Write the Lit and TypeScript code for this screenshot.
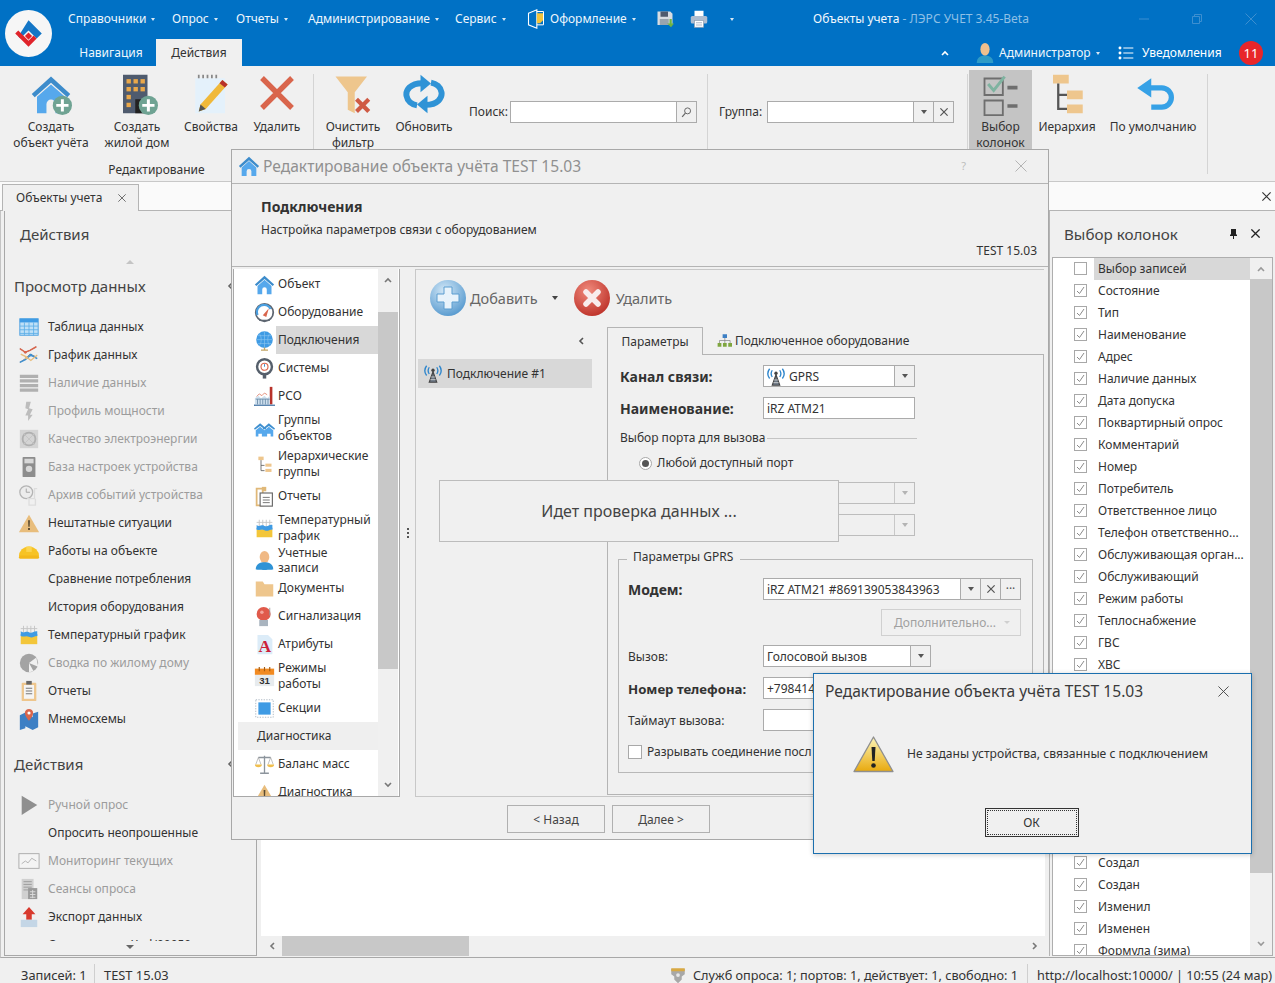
import { LitElement, css, html, svg } from "lit";
import { customElement } from "lit/decorators.js";

const homeShape = svg`<path d="M12 2 1 12l1.700 1.800L12 5.600l9.300 8.200L23 12z" fill="#3d8ccb"/><path d="M4 13.600 12 6.600l8 7V23h-5.400v-5.200a2.600 2.600 0 0 0-5.200 0V23H4z" fill="#56a8ec"/>`;
const plusBadge = svg`<circle cx="18.500" cy="18.500" r="5.500" fill="#6fa393"/><path d="M18.500 15v7M15 18.500h7" stroke="#fff" stroke-width="1.700"/>`;
const warnShape = svg`<path d="M12 3 23 22H1z" fill="#e8bd7c"/><path d="M11 9h2l-.3 7h-1.400zM11 17.500h2v2h-2z" fill="#5a4a30"/>`;

const icons: Record<string, unknown> = {
  home: homeShape,
  homePlus: svg`${homeShape}${plusBadge}`,
  building: svg`<rect x="4" y="1" width="14" height="22" fill="#4f5b6e"/><g fill="#eaa84a"><rect x="6" y="3.500" width="2.500" height="2.500"/><rect x="10" y="3.500" width="2.500" height="2.500"/><rect x="14" y="3.500" width="2.500" height="2.500"/><rect x="6" y="8" width="2.500" height="2.500"/><rect x="10" y="8" width="2.500" height="2.500"/><rect x="14" y="8" width="2.500" height="2.500"/><rect x="6" y="12.500" width="2.500" height="2.500"/><rect x="6" y="17" width="2.500" height="2.500"/></g><rect x="11" y="15" width="5" height="8" fill="#222"/>${plusBadge}`,
  note: svg`<rect x="3" y="3" width="17" height="20" fill="#e4f1fb"/><path d="M5 1v2M7.500 1v2M10 1v2M12.500 1v2M15 1v2" stroke="#888" stroke-width="1"/><path d="m18.500 4 3 2.500L9 20.500l-4 1.500 1-4z" fill="#f0b93a"/><path d="m18.500 4 3 2.500-1.600 1.800-3-2.500z" fill="#b8322a"/><path d="m5 22 1-4 3 2.500z" fill="#555"/>`,
  cross: svg`<path d="M3 3l18 18M21 3 3 21" stroke="#d9654c" stroke-width="3.200"/>`,
  funnel: svg`<path d="M2 2h18l-7 9v12l-4-2V11z" fill="#eec68d"/><path d="m14 15 7 7m0-7-7 7" stroke="#cf5a44" stroke-width="2.400"/>`,
  refresh: svg`<path d="M11 5.800C4 5.800 1.500 10 2 13c.5 3 3 5 6 5.500" fill="none" stroke="#2f93d6" stroke-width="3.400"/><path d="M10 1v10l6-5z" fill="#2f93d6"/><path d="M13 18.200c7 0 9.500-4.200 9-7.200-.5-3-3-5-6-5.500" fill="none" stroke="#2f93d6" stroke-width="3.400"/><path d="M14 13v10l-6-5z" fill="#2f93d6"/>`,
  columns: svg`<path d="M3 3h10v9H3zM3 15h10v8H3z" fill="none" stroke="#6e6e6e" stroke-width="1"/><path d="m5 6 3 3.500L14 2" fill="none" stroke="#7fb3a0" stroke-width="1.600"/><path d="M15.500 7H21v2h-5.500zM15.500 17H21v2h-5.500z" fill="#6e6e6e"/>`,
  tree: svg`<rect x="4" y="1" width="9" height="5" fill="#eec68d"/><rect x="12" y="10" width="9" height="5" fill="#eec68d"/><rect x="12" y="18" width="9" height="5" fill="#eec68d"/><path d="M7 6v14.500h5M7 12.500h5" fill="none" stroke="#555" stroke-width="1.300"/>`,
  undo: svg`<path d="M11 3v4h6a7 7 0 0 1 0 14h-6v-3h6a4 4 0 0 0 0-8h-6v4L3 8.500z" fill="#36a1e6"/>`,
  table: svg`<rect x="2" y="3" width="20" height="18" fill="#bfe0f7" stroke="#4a9fe0"/><rect x="2" y="3" width="20" height="4" fill="#3f9be4"/><path d="M2 11h20M2 15h20M2 19h20M7 7v14M12 7v14M17 7v14" stroke="#5aaee8" stroke-width=".9"/>`,
  chart: svg`<path d="m2 5 6 4 5-2 7-4M2 20l6-4 5-5 7 3" fill="none" stroke="#888" stroke-width="1"/><path d="m2 5 6 4 5-2 7-4" fill="none" stroke="#d9654c" stroke-width="1.600"/><path d="m2 20 6-3 6-5 7 4" fill="none" stroke="#3f8fcf" stroke-width="1.600"/><path d="m3 11 6 3 5 4 7-6" fill="none" stroke="#e8bd7c" stroke-width="1.400"/><circle cx="8" cy="9" r="1.500" fill="#d9654c"/><circle cx="14" cy="12" r="1.500" fill="#3f8fcf"/><circle cx="9" cy="15" r="1.500" fill="#e8bd7c"/>`,
  bars: svg`<path d="M2 3h20v3.500H2zM2 8h20v3.500H2zM2 13h20v3.500H2zM2 18h20v3.500H2z" fill="#b0b0b0"/>`,
  bolt: svg`<path d="m9 2h5l-2 7 4 1-3 6h3l-5 7v-6H8l3-7-3-1z" fill="#bdbdbd"/>`,
  quality: svg`<rect x="2" y="2" width="20" height="20" fill="#d4d4d4"/><circle cx="12" cy="12" r="7" fill="none" stroke="#b0b0b0" stroke-width="2"/><path d="M6 6l12 12M18 6 6 18" stroke="#c4c4c4"/>`,
  device: svg`<rect x="5" y="1" width="14" height="22" rx="1" fill="#8d8d8d"/><rect x="7" y="3" width="10" height="5" fill="#d8d8d8"/><circle cx="12" cy="14" r="3.500" fill="#d8d8d8"/>`,
  clock: svg`<circle cx="9" cy="9" r="7" fill="#ececec" stroke="#b4b4b4" stroke-width="1.400"/><path d="M9 5v4h4" fill="none" stroke="#a0a0a0"/><path d="M10 16h8V5h3M12 16v7h7v-7" fill="none" stroke="#ddd" stroke-width="1.400"/>`,
  warn: warnShape,
  hat: svg`<path d="M1 18a11 11 0 0 1 22 0z" fill="#f7c325"/><rect x="1" y="17" width="22" height="3.500" rx="1.700" fill="#f3b81c"/><path d="M9 7h6v6H9z" fill="#fbd551"/>`,
  temp: svg`<path d="M6 2v9M10 2v9M14 2v9M18 2v9M3 5h18" stroke="#c4c4c4"/><path d="M3 8c4 3 5-1 9 1s5-2 9-1v5H3z" fill="#3f9be4"/><path d="M3 13h18v9H3z" fill="#f3c63a"/><path d="M3 13c4 2 5-1 9 1s5-1 9-1v-2c-4 0-5 2-9 1s-5 0-9-1z" fill="#3f9be4"/>`,
  pie: svg`<circle cx="12" cy="12" r="10" fill="#a3a3a3"/><path d="M12 12 20 6l2 10zM12 12l5 9-5 1z" fill="#f0f0f0"/>`,
  clip: svg`<rect x="4" y="3" width="16" height="20" rx="1" fill="#eec68d"/><rect x="6.500" y="5.500" width="11" height="15" fill="#f5f5f5"/><rect x="9" y="1" width="6" height="4" fill="#666"/><path d="M8.500 9h7M8.500 12h7M8.500 15h7" stroke="#777" stroke-width="1.200"/>`,
  map: svg`<path d="M2 8l6-3v17l-6 2zM16 6l6-2v17l-6 3zM8 5l8 5v14l-8-4z" fill="#3d7fc4"/><path d="M12 1a4.500 4.500 0 0 1 4.500 4.500C16.500 9 12 14 12 14S7.500 9 7.500 5.500A4.500 4.500 0 0 1 12 1z" fill="#d9654c"/><circle cx="12" cy="5.500" r="1.700" fill="#fff"/>`,
  play: svg`<path d="M4 2 21 12 4 23z" fill="#8f8f8f"/>`,
  monitor: svg`<rect x="1" y="4" width="22" height="16" fill="#f4f4f4" stroke="#aaa"/><path d="m4 15 4-3 3 2 4-5 5 3" fill="none" stroke="#b0b0b0"/>`,
  sessions: svg`<path d="M4 1h13v22H4z" fill="#d0d0d0"/><path d="M6 4h9M6 7h9M6 10h9M6 13h5" stroke="#999"/><rect x="11" y="11" width="10" height="12" fill="#9a9a9a"/><path d="M13 15h6M13 18h6M13 21h6M16 13v9" stroke="#ddd"/>`,
  upload: svg`<path d="M12 1 19 9h-4v6H9V9H5z" fill="#d83a2e"/><rect x="3" y="15" width="18" height="8" fill="#c4d6e6"/>`,
  gauge: svg`<circle cx="12" cy="12" r="10" fill="#fff" stroke="#5d6570" stroke-width="2"/><path d="M4 15a8 8 0 0 1 15-7" fill="none" stroke="#4a9fe0" stroke-width="2.500"/><path d="M10 15 17 7l-3 10z" fill="#d9654c"/><path d="M6 21h12" stroke="#5d6570" stroke-width="1.500"/>`,
  globe: svg`<circle cx="12" cy="11" r="9.500" fill="#3f9be4"/><path d="M3 11h18M12 2v18M6 4c3 4 3 10 0 14M18 4c-3 4-3 10 0 14M4 6.500h16M4 15.500h16" fill="none" stroke="#8cc6f0" stroke-width=".7"/><path d="M8 23h8M12 20v3" stroke="#c2a565" stroke-width="1.500"/>`,
  system: svg`<circle cx="12" cy="10" r="8.500" fill="#fff" stroke="#555f6b" stroke-width="2.800"/><circle cx="12" cy="10" r="4" fill="none" stroke="#d9654c" stroke-width="1.300"/><path d="M12 10V7" stroke="#3f8fcf" stroke-width="1.200"/><rect x="10" y="18.500" width="4" height="5" fill="#555f6b"/>`,
  plant: svg`<rect x="18" y="1" width="3" height="20" fill="#b8322a"/><path d="M1 14l4-3 3 3 4-3 3 3 3-3v10H1z" fill="#cfe0ee"/><path d="M2 15h16M4 15v6M7 15v6M10 15v6M13 15v6M16 15v6" stroke="#6a8ba8"/><path d="M0 22h24" stroke="#4a7aa8" stroke-width="1.500"/><path d="M3 12l3-3 3 2 3-3 3 2" fill="none" stroke="#d9654c" stroke-width=".8"/>`,
  homes: svg`<path d="M7 6 0 12l1 1.500L7 9l6 4.500L14 12zM17 6l-7 6 1 1.500L17 9l6 4.500L24 12z" fill="#3f8fcf"/><path d="M2 14 7 10l5 4v7H9v-3H5v3H2zM12 14l5-4 5 4v7h-3v-3h-4v3h-3z" fill="#56a8ec"/>`,
  treeSmall: svg`<rect x="5" y="3" width="6" height="4" fill="#eec68d"/><rect x="13" y="11" width="7" height="3.500" fill="#eec68d"/><rect x="13" y="17" width="7" height="3.500" fill="#eec68d"/><path d="M8 7v12h4M8 13h4" fill="none" stroke="#666"/>`,
  report: svg`<path d="M3 3h7v19H3z" fill="none" stroke="#e0b878" stroke-width="2"/><rect x="7" y="8" width="14" height="15" fill="#fff" stroke="#666" stroke-width="1.300"/><path d="M10 13h8M10 16h8M10 19h8" stroke="#666"/><rect x="9" y="1" width="5" height="5" fill="#e0b878"/>`,
  user: svg`<ellipse cx="12" cy="8" rx="5.500" ry="7" fill="#f0b985"/><path d="M2 22c0-6 5-8 10-8s10 2 10 8c0 1-20 1-20 0z" fill="#2f93d6"/>`,
  folder: svg`<path d="M2 4h8l2 3h10v14H2z" fill="#eec68d"/>`,
  bell: svg`<circle cx="11" cy="9" r="8" fill="#e05a4b"/><circle cx="9" cy="7" r="2" fill="#f4a49a"/><path d="M6 16h10v7H6z" fill="#a9b4bf"/><path d="M18 2v9" stroke="#999"/>`,
  attr: svg`<path d="M4 1h12l5 5v17H4z" fill="#dcecf8"/><text x="12.500" y="20" font-size="20" font-weight="700" font-family="Liberation Serif" text-anchor="middle" fill="#cc1f3a">A</text>`,
  calendar: svg`<rect x="1" y="8" width="22" height="15" fill="#e7ebee"/><rect x="1" y="3" width="22" height="7" fill="#f28a21"/><path d="M6 1v5M12 1v5M18 1v5" stroke="#a35a10" stroke-width="1.300"/><text x="12" y="21" font-size="11" font-weight="700" font-family="Liberation Sans" text-anchor="middle" fill="#333">31</text>`,
  section: svg`<rect x="2" y="2" width="20" height="20" fill="none" stroke="#a8b4bf" stroke-dasharray="1.500 1.500"/><rect x="5" y="5" width="14" height="14" fill="#3f9be4"/>`,
  scales: svg`<path d="M12 2v19M5 4h14M7 22h10" stroke="#8c949c" stroke-width="1.500"/><path d="M5 4 2 12M5 4l3 8M19 4l-3 8M19 4l3 8" stroke="#999" stroke-width=".7"/><path d="M1 12h8a4 3 0 0 1-8 0zM15 12h8a4 3 0 0 1-8 0z" fill="#f0bf4e"/>`,
  pinUser: svg`<ellipse cx="12" cy="8" rx="5" ry="7" fill="#f0c08e"/><path d="M3 23c0-6 4-8 9-8s9 2 9 8z" fill="#2f9bc6"/>`,
  service: svg`<path d="M3 4h18v7l-4 3v4l-5 5-5-5v-4l-4-3z" fill="#a8a8a8"/><path d="M3 3h18v4H3z" fill="#d8a943"/><circle cx="12" cy="12" r="2.500" fill="#e8e8e8"/>`,
  net: svg`<rect x="9" y="2" width="7" height="6" fill="#3d7fc4"/><path d="M12.500 8v4M4 16v-4h17v4M12.500 12v4" fill="none" stroke="#777"/><path d="M1 16h6v6H1zM9.500 16h6v6h-6zM18 16h6v6h-6z" fill="#7fa63f"/>`,
  antenna: svg`<path d="M12 9 7 23h10z" fill="#6b7683" stroke="#444" stroke-width="1.500"/><path d="M9.500 16h5M8.500 19.500h7" stroke="#ddd"/><circle cx="12" cy="7" r="2.200" fill="#444"/><path d="M7 3c-2 3-2 6 0 9M3.500 1c-3 4-3 9 0 13M17 3c2 3 2 6 0 9M20.500 1c3 4 3 9 0 13" fill="none" stroke="#2f86cc" stroke-width="1.800"/>`,
  design: svg`<path d="M3 5 13 1v22L3 19z" fill="none" stroke="#fff" stroke-width="1.300"/><path d="M13 5h8v8l-4 4h-4z" fill="#f0c33c"/><path d="M13 3h8v16h-8" fill="none" stroke="#fff" stroke-width="1.200"/>`,
  save: svg`<path d="M2 2h17l3 3v15H2z" fill="#d8dde2"/><rect x="6" y="2" width="10" height="7" fill="#4f5b6e"/><rect x="5" y="12" width="12" height="8" fill="#9aa4ae"/><path d="M18 12v6h-3l5 5 4-5h-3v-6z" fill="#6fb342"/>`,
  print: svg`<rect x="6" y="1" width="12" height="8" fill="#fff"/><rect x="1" y="8" width="22" height="10" rx="2" fill="#aebdd0"/><rect x="6" y="14" width="12" height="9" fill="#fff" stroke="#93a2b5"/><path d="M8 17h8M8 20h8" stroke="#93a2b5"/>`,
  listing: svg`<circle cx="3" cy="4.500" r="2.200" fill="#fff"/><circle cx="3" cy="12" r="2.200" fill="#fff"/><circle cx="3" cy="19.500" r="2.200" fill="#fff"/><path d="M8 4.500h15M8 12h15M8 19.500h15" stroke="#fff" stroke-width="1.500"/>`,
  search: svg`<circle cx="14" cy="9" r="5.500" fill="none" stroke="#666" stroke-width="1.800"/><path d="M10 13 4 20" stroke="#666" stroke-width="2.200"/>`,
};

const ic = (name: string, size = 20) => html`<svg class="ic" width=${size} height=${size} viewBox="0 0 24 24">${icons[name]}</svg>`;

const chev = (dir: "up" | "down" | "left" | "right", color = "#777") => {
  const pts = { up: "3,8 6,5 9,8", down: "3,4 6,7 9,4", left: "8,3 5,6 8,9", right: "4,3 7,6 4,9" }[dir];
  return html`<svg class="ic" width="12" height="12" viewBox="0 0 12 12"><polyline points=${pts} fill="none" stroke=${color} stroke-width="1.600"/></svg>`;
};

const closeX = (color: string, size = 12, weight = 1) => html`<svg class="ic" width=${size} height=${size} viewBox="0 0 12 12"><path d="M.5.5l11 11m0-11-11 11" stroke=${color} stroke-width=${weight}/></svg>`;

const menus = ["Справочники", "Опрос", "Отчеты", "Администрирование", "Сервис"];

type SideItem = { t: string; i?: string; off?: boolean };
const viewItems: SideItem[] = [
  { t: "Таблица данных", i: "table" },
  { t: "График данных", i: "chart" },
  { t: "Наличие данных", i: "bars", off: true },
  { t: "Профиль мощности", i: "bolt", off: true },
  { t: "Качество электроэнергии", i: "quality", off: true },
  { t: "База настроек устройства", i: "device", off: true },
  { t: "Архив событий устройства", i: "clock", off: true },
  { t: "Нештатные ситуации", i: "warn" },
  { t: "Работы на объекте", i: "hat" },
  { t: "Сравнение потребления" },
  { t: "История оборудования" },
  { t: "Температурный график", i: "temp" },
  { t: "Сводка по жилому дому", i: "pie", off: true },
  { t: "Отчеты", i: "clip" },
  { t: "Мнемосхемы", i: "map" },
];
const actionItems: SideItem[] = [
  { t: "Ручной опрос", i: "play", off: true },
  { t: "Опросить неопрошенные" },
  { t: "Мониторинг текущих", i: "monitor", off: true },
  { t: "Сеансы опроса", i: "sessions", off: true },
  { t: "Экспорт данных", i: "upload" },
  { t: "Сохранение в Xml/00050" },
];

type NavItem = { t: string[]; i?: string; sel?: boolean; head?: boolean; tight?: boolean };
const navItems: NavItem[] = [
  { t: ["Объект"], i: "home" },
  { t: ["Оборудование"], i: "gauge" },
  { t: ["Подключения"], i: "globe", sel: true },
  { t: ["Системы"], i: "system" },
  { t: ["РСО"], i: "plant" },
  { t: ["Группы", "объектов"], i: "homes" },
  { t: ["Иерархические", "группы"], i: "treeSmall" },
  { t: ["Отчеты"], i: "report" },
  { t: ["Температурный", "график"], i: "temp" },
  { t: ["Учетные", "записи"], i: "user", tight: true },
  { t: ["Документы"], i: "folder" },
  { t: ["Сигнализация"], i: "bell" },
  { t: ["Атрибуты"], i: "attr" },
  { t: ["Режимы", "работы"], i: "calendar" },
  { t: ["Секции"], i: "section" },
  { t: ["Диагностика"], head: true },
  { t: ["Баланс масс"], i: "scales" },
  { t: ["Диагностика"], i: "warn" },
];

// rows hidden behind the message box stay blank
const columnsTop = [
  "Состояние", "Тип", "Наименование", "Адрес", "Наличие данных", "Дата допуска", "Поквартирный опрос",
  "Комментарий", "Номер", "Потребитель", "Ответственное лицо", "Телефон ответственно...", "Обслуживающая орган...",
  "Обслуживающий", "Режим работы", "Теплоснабжение", "ГВС", "ХВС",
];
const columnsBottom = ["Создал", "Создан", "Изменил", "Изменен", "Формула (зима)"];

@customElement("app-root")
export class AppRoot extends LitElement {
  static override styles = css`
    :host { display: block; }
    * { box-sizing: border-box; }
    .app { position: relative; width: 1275px; height: 983px; overflow: hidden; background: #f0f0f0; color: #333; font: 12px/16px "Noto Sans", sans-serif; display: flex; flex-direction: column; }
    .ic { display: block; flex: none; }
    .nw { white-space: nowrap; }

    /* blue title area */
    .header { height: 66px; flex: none; background: #0071c5; color: #fff; display: flex; }
    .logo { width: 66px; flex: none; display: flex; align-items: center; padding-left: 5px; }
    .hdr-rows { flex: 1; display: flex; flex-direction: column; min-width: 0; }
    .menubar { height: 38px; display: grid; grid-template-columns: 104px 64px 72px 147px 71px 130px 34px 34px 89px 1fr 155px; align-items: center; padding-left: 2px; }
    .menu { display: flex; align-items: center; gap: 5px; white-space: nowrap; color: #eef6fc; }
    .menu .ic { margin-right: -1px; }
    .caret { width: 0; height: 0; border-left: 2.5px solid transparent; border-right: 2.5px solid transparent; border-top: 3px solid #d8e8f5; flex: none; display: block; }
    .qa-more { padding-left: 6px; }
    .title { white-space: nowrap; color: #f2f8fd; }
    .title span { color: #8fc0e6; }
    .winbtns { display: grid; grid-template-columns: 48px 58px 49px; justify-items: center; }
    .rowtabs { flex: 1; display: flex; align-items: flex-end; }
    .rt { height: 27px; display: flex; align-items: center; justify-content: center; color: #eef6fc; padding-top: 1px; }
    .rt.plain { width: 90px; }
    .rt.act { width: 86px; background: #f0f0f0; color: #333; }
    .rt-right { margin-left: auto; height: 28px; display: grid; grid-template-columns: 35px 25px 119px 24px 91px 36px; align-items: center; padding-right: 6px; padding-top: 2px; }
    .badge { width: 24px; height: 24px; border-radius: 50%; background: #e8262a; color: #fff; display: flex; align-items: center; justify-content: center; justify-self: center; font-size: 13px; }

    /* ribbon */
    .ribbon { height: 115px; flex: none; display: flex; position: relative; }
    .rgroup { display: flex; flex-direction: column; border-right: 1px solid #d4d4d4; margin: 8px 0 7px; }
    .rgroup.g1 { width: 314px; padding-left: 8px; }
    .rgroup.g2 { width: 394px; padding-left: 1px; }
    .rgroup.g3 { width: 260px; }
    .rgroup.g4 { width: 240px; }
    .rrow { display: flex; flex: 1; margin-top: -8px; }
    .glabel { height: 16px; text-align: center; padding-right: 8px; position: relative; top: 3px; margin-bottom: -1px; }
    .rb { display: flex; flex-direction: column; align-items: center; padding-top: 7px; text-align: center; white-space: nowrap; }
    .rb .ico { height: 46px; }
    .rb.w86 { width: 86px; }
    .rb.w62 { width: 62px; }
    .rb.w70 { width: 70px; }
    .rb.w76 { width: 76px; }
    .rb.w66 { width: 66px; }
    .rb.w102 { width: 102px; }
    .rb.w63 { width: 63px; }
    .rb.on { background: #c4c4c4; margin: 4px 0 0 1px; padding-top: 3px; height: 100px; }
    .rfield { display: flex; align-items: center; gap: 2px; height: 22px; margin-top: 35px; white-space: nowrap; }
    .rfield.search { margin-left: 12px; }
    .rfield.search > span { width: 39px; flex: none; }
    .rfield.group { margin-left: 11px; }
    .rfield.group > span { width: 46px; flex: none; }
    .w187 { width: 187px; }

    /* shared inputs */
    .combo { display: flex; height: 22px; border: 1px solid #ababab; background: #fff; align-items: stretch; white-space: nowrap; }
    .combo .val { flex: 1; display: flex; align-items: center; gap: 4px; padding: 1px 0 0 3px; min-width: 0; overflow: hidden; }
    .combo .cell { width: 20px; flex: none; border-left: 1px solid #ababab; background: #f0f0f0; display: flex; align-items: center; justify-content: center; color: #555; }
    .combo.off { background: #f0f0f0; border-color: #bdbdbd; }
    .combo.off .cell { border-color: #c8c8c8; }
    .tri { width: 0; height: 0; border-left: 3.5px solid transparent; border-right: 3.5px solid transparent; border-top: 4px solid #555; }
    .combo.off .tri { border-top-color: #b4b4b4; }

    /* document tab strip */
    .docstrip { height: 30px; flex: none; background: #fafafa; border-top: 1px solid #c8c8c8; display: flex; align-items: flex-end; padding-left: 2px; border-bottom: 1px solid #b4b4b4; }
    .doctab { width: 137px; height: 27px; margin-bottom: -1px; background: #f0f0f0; border: 1px solid #b4b4b4; border-bottom: none; display: flex; align-items: center; padding-left: 13px; gap: 16px; white-space: nowrap; }
    .docclose { margin-left: auto; align-self: center; margin-right: 4px; }

    /* main row */
    .main { height: 747px; flex: none; display: flex; padding-bottom: 1px; border-bottom: 1px solid #a8a8a8; border-left: 1px solid #c4c4c4; background: #f0f0f0; }
    .left { width: 253px; margin-left: 3px; flex: none; border: 1px solid #a8a8a8; border-top: none; padding-top: 1px; display: flex; flex-direction: column; overflow: hidden; }
    .lp-title { height: 44px; flex: none; font-size: 15px; color: #444; display: flex; align-items: center; padding-left: 15px; }
    .lp-up { height: 8px; flex: none; display: flex; justify-content: center; align-items: flex-end; padding-right: 2px; }
    .lp-tri-up { width: 0; height: 0; border-left: 4px solid transparent; border-right: 4px solid transparent; border-bottom: 4px solid #c4c4c4; }
    .lp-tri-down { width: 0; height: 0; border-left: 4px solid transparent; border-right: 4px solid transparent; border-top: 4px solid #666; }
    .lp-scroll { flex: 1; overflow: hidden; min-height: 0; }
    .lp-down { height: 14px; flex: none; display: flex; justify-content: center; padding-top: 4px; padding-right: 2px; }
    .lp-head { height: 46px; margin-bottom: 3px; display: flex; align-items: center; justify-content: space-between; font-size: 15px; color: #444; padding: 0 20px 2px 9px; }
    .lp-head.second { margin-top: 9px; }
    .lp-item { height: 28px; display: flex; align-items: center; padding-left: 13px; white-space: nowrap; }
    .lp-item.off { color: #9c9c9c; }
    .lp-item .slot { width: 22px; margin-right: 8px; flex: none; display: flex; justify-content: center; }

    .center { flex: 1; margin-left: 4px; display: flex; flex-direction: column; min-width: 0; }
    .canvas { flex: 1; background: #fff; }
    .hs { height: 20px; flex: none; background: #f0f0f0; display: flex; align-items: center; }
    .hs .a { width: 21px; display: flex; justify-content: center; flex: none; }
    .hs .thumb { width: 187px; height: 100%; background: #c8c8c8; flex: none; }
    .hs .rest { flex: 1; }

    .right { width: 226px; margin-left: 4px; flex: none; border-left: 1px solid #b4b4b4; padding-top: 1px; display: flex; flex-direction: column; padding-left: 2px; }
    .rp-head { height: 45px; flex: none; display: flex; align-items: center; padding: 0 15px 2px 12px; font-size: 15.2px; color: #444; }
    .rp-head .pin { margin-left: auto; margin-right: 13px; }
    .rp-list { flex: 1; min-height: 0; display: flex; border: 1px solid #aeaeae; margin-right: 2px; background: #fff; overflow: hidden; }
    .rp-rows { width: 197px; flex: none; overflow: hidden; }
    .col { height: 22px; display: flex; align-items: center; padding-left: 21px; white-space: nowrap; }
    .col.blank { visibility: hidden; }
    .cb { width: 13px; height: 13px; border: 1px solid #a8a8a8; background: #fff; flex: none; display: flex; align-items: center; justify-content: center; }
    .col .cb { margin-top: -2px; }
    .col .lbl { margin-left: 7px; padding-left: 4px; height: 100%; flex: 1; display: flex; align-items: center; }
    .col.sel .lbl { background: #d8d8d8; }
    .vs { flex: none; background: #f0f0f0; display: flex; flex-direction: column; align-items: stretch; }
    .vs .a { display: flex; justify-content: center; flex: none; }
    .vs .thumb { background: #c8c8c8; flex: none; }
    .vs .rest { flex: 1; }
    .vs .b { display: flex; justify-content: center; flex: none; height: 22px; align-items: center; }
    .rp-vs { width: 22px; }
    .rp-vs .a { height: 21px; align-items: center; }
    .rp-vs .thumb { height: 594px; }
    .nav-vs { width: 20px; }
    .nav-vs .a { height: 43px; padding-top: 5px; }
    .nav-vs .thumb { height: 357px; }

    /* status bar */
    .status { flex: 1; display: flex; align-items: center; padding: 6px 3px 0 21px; white-space: nowrap; font-size: 12.85px; }
    .st-count { width: 64px; flex: none; }
    .sdiv { width: 1px; height: 22px; background: #cfcfcf; margin: 0 9px; }
    .s-right { margin-left: auto; display: flex; align-items: center; font-size: 12.7px; }
    .s-right .ic { margin-right: 6px; }

    /* edit dialog, window over the app */
    .dlg { position: absolute; left: 231px; top: 149px; width: 818px; height: 691px; background: #f0f0f0; border: 1px solid #a8a8a8; display: flex; flex-direction: column; }
    .dlg-title { height: 34px; flex: none; border-bottom: 1px solid #b4b4b4; display: flex; align-items: center; padding: 0 0 2px 6px; gap: 3px; font-size: 15.6px; color: #909090; white-space: nowrap; }
    .q { margin-left: auto; font-size: 11px; color: #bdbdbd; margin-right: 46px; }
    .dlg-title .x { margin-right: 21px; }
    .dlg-head { height: 83px; flex: none; border-bottom: 1px solid #b4b4b4; padding: 15px 11px 0 29px; display: flex; flex-direction: column; }
    .dlg-h { font-weight: 700; font-size: 14px; height: 16px; }
    .dlg-s { margin-top: 7px; height: 16px; }
    .dlg-t { margin-top: 5px; text-align: right; height: 16px; }
    .dlg-body { flex: 1; display: flex; min-height: 0; padding-top: 2px; }
    .nav { width: 167px; margin-left: 1px; flex: none; border: 1px solid #a8a8a8; border-top: none; background: #fff; display: flex; overflow: hidden; }
    .nav-list { width: 144px; flex: none; overflow: hidden; padding-top: 1px; }
    .ni { display: flex; align-items: center; height: 28px; padding-left: 20px; }
    .ni.two { height: 36px; }
    .ni.tight { line-height: 15px; }
    .ni .slot { width: 20px; margin-right: 4px; flex: none; display: flex; justify-content: center; }
    .ni .txt { height: 28px; display: flex; flex-direction: column; justify-content: center; flex: 1; white-space: nowrap; }
    .ni.two .txt { height: 36px; }
    .ni.sel .txt { background: #d8d8d8; margin-left: -2px; padding-left: 2px; }
    .ni.head { background: #efefef; margin-left: 4px; padding-left: 19px; }
    .split { width: 15px; flex: none; display: flex; align-items: center; justify-content: center; }
    .dots { display: flex; flex-direction: column; gap: 2px; }
    .dots i { width: 2px; height: 2px; background: #555; display: block; }
    .pane { width: 629px; flex: none; border-left: 1px solid #c8c8c8; border-top: 1px solid #c8c8c8; border-bottom: 1px solid #c8c8c8; display: flex; flex-direction: column; }
    .tools { height: 57px; flex: none; display: flex; align-items: center; padding: 0 0 1px 13px; font-size: 14.5px; color: #666; white-space: nowrap; }
    .tools .add { margin-left: 3px; }
    .tools .tri { margin: 0 15px 0 14px; border-top-color: #444; }
    .tools .del { margin-left: 5px; }
    .pane-body { flex: 1; min-height: 0; display: flex; }
    .conns { width: 176px; flex: none; }
    .conn-back { height: 27px; display: flex; align-items: center; justify-content: flex-end; padding-right: 5px; }
    .conn { margin: 5px 0 0 2px; height: 29px; background: #d8d8d8; display: flex; align-items: center; gap: 5px; padding-left: 6px; white-space: nowrap; }
    .split2 { width: 15px; flex: none; padding: 200px 0 0 7px; }
    .tabsbox { flex: 1; min-width: 0; display: flex; flex-direction: column; }
    .tabrow { height: 27px; flex: none; display: flex; }
    .ptab { display: flex; align-items: center; white-space: nowrap; gap: 3px; }
    .ptab.on { width: 96px; border: 1px solid #b4b4b4; border-bottom: none; justify-content: center; background: #f0f0f0; margin-bottom: -1px; position: relative; }
    .ptab.alt { padding-left: 14px; }
    .page { flex: 1; min-height: 0; border: 1px solid #b4b4b4; margin-bottom: 1px; padding-top: 10px; display: flex; flex-direction: column; overflow: hidden; }
    .frow { display: flex; align-items: center; height: 22px; padding-left: 12px; flex: none; white-space: nowrap; }
    .frow + .frow { margin-top: 10px; }
    .flabel { width: 143px; flex: none; padding-top: 2px; }
    .flabel.b { font-weight: 700; font-size: 14px; }
    .flabel.b2 { font-weight: 700; font-size: 13.2px; }
    .w152 { width: 152px; }
    .inp { height: 22px; border: 1px solid #ababab; background: #fff; padding: 1px 0 0 3px; display: flex; align-items: center; }
    .legend-line { display: flex; align-items: center; height: 16px; margin: 11px 0 0 12px; width: 297px; flex: none; white-space: nowrap; }
    .legend-line::after { content: ""; flex: 1; height: 1px; background: #c4c4c4; margin-left: 1px; }
    .radio { display: flex; align-items: center; height: 16px; margin: 9px 0 11px 31px; gap: 5px; flex: none; white-space: nowrap; }
    .rd { width: 13px; height: 13px; border-radius: 50%; border: 1px solid #a8a8a8; background: #fff; display: flex; align-items: center; justify-content: center; }
    .rd i { width: 7px; height: 7px; border-radius: 50%; background: #555; display: block; }
    .gprs { margin: 23px 0 0 10px; width: 415px; height: 214px; flex: none; border: 1px solid #b8b8b8; padding: 18px 11px 0 9px; position: relative; display: flex; flex-direction: column; }
    .gprs .frow { padding-left: 0; }
    .gprs .flabel { width: 135px; }
    .gprs .legend { position: absolute; left: 8px; top: -11px; background: #f0f0f0; padding: 0 7px 0 6px; height: 16px; white-space: nowrap; }
    .grow { flex: 1; }
    .extra { margin: 9px 0 9px auto; width: 140px; height: 27px; flex: none; border: 1px solid #d0d0d0; color: #a0a0a0; display: flex; align-items: center; padding-left: 12px; gap: 8px; white-space: nowrap; }
    .extra .tri { border-top-color: #cfcfcf; border-left-width: 3px; border-right-width: 3px; border-top-width: 3px; }
    .w168 { width: 168px; }
    .w190 { width: 190px; }
    .checkline { display: flex; align-items: center; gap: 5px; margin-top: 13px; white-space: nowrap; height: 16px; flex: none; }
    .checkline .cb { width: 14px; height: 14px; }
    .foot { height: 42px; flex: none; display: flex; gap: 7px; padding: 8px 0 0 275px; }
    .btn { width: 98px; height: 28px; border: 1px solid #b0b0b0; display: flex; align-items: center; justify-content: center; color: #444; padding-top: 1px; }

    /* over the form while checks run */
    .busy { position: absolute; left: 207px; top: 330px; width: 400px; height: 62px; background: #f0f0f0; border: 1px solid #bcbcbc; display: flex; align-items: center; justify-content: center; font-size: 16px; color: #444; }

    /* message box */
    .alert { position: absolute; left: 813px; top: 673px; width: 439px; height: 181px; background: #f0f0f0; border: 1px solid #1b6fae; box-shadow: 0 1px 5px rgba(0,0,0,.2); display: flex; flex-direction: column; }
    .al-title { height: 34px; flex: none; display: flex; align-items: center; justify-content: space-between; padding: 0 22px 0 11px; font-size: 15.6px; color: #3a3a3a; white-space: nowrap; }
    .al-body { height: 90px; flex: none; display: flex; align-items: center; padding: 2px 0 0 39px; gap: 13px; white-space: nowrap; font-size: 12.1px; }
    .al-foot { display: flex; justify-content: center; padding: 10px 2px 0 0; }
    .ok { width: 94px; height: 29px; border: 1px solid #333; padding: 1px; }
    .ok span { display: flex; width: 100%; height: 100%; border: 1px dotted #333; align-items: center; justify-content: center; }
  `;

  private sideItem(it: SideItem) {
    return html`<div class="lp-item ${it.off ? "off" : ""}"><span class="slot">${it.i ? ic(it.i, 22) : ""}</span>${it.t}</div>`;
  }

  private check() {
    return html`<svg class="ic" width="9" height="9" viewBox="0 0 9 9"><path d="M1 5l2.500 2.500L8 1" fill="none" stroke="#8a8a8a" stroke-width="1"/></svg>`;
  }

  private colRow(c: string) {
    return html`<div class="col"><span class="cb">${this.check()}</span><span class="lbl">${c}</span></div>`;
  }

  private renderHeader() {
    return html`
      <div class="header">
        <div class="logo">
          <svg class="ic" width="47" height="47" viewBox="0 0 46 46">
            <circle cx="23" cy="23" r="23" fill="#f6f6f6"/>
            <path d="M23 10l13 13-5 5-8-8-8 8-2-2z" fill="#1476c6"/>
            <path d="M10 23l3-3 10 10 5-5 3 3-8 8z" fill="#e0242b"/>
            <path d="M23 22l3.500 3.500L23 29l-3.500-3.500z" fill="#e0242b"/>
          </svg>
        </div>
        <div class="hdr-rows">
          <div class="menubar">
            ${menus.map((m) => html`<div class="menu">${m}<span class="caret"></span></div>`)}
            <div class="menu">${ic("design", 20)}<span>Оформление</span><span class="caret"></span></div>
            <div>${ic("save", 18)}</div>
            <div>${ic("print", 18)}</div>
            <div class="qa-more"><span class="caret"></span></div>
            <div class="title">Объекты учета<span> - ЛЭРС УЧЕТ 3.45-Beta</span></div>
            <div class="winbtns">
              <svg class="ic" width="12" height="12" viewBox="0 0 12 12"><path d="M1 6h10" stroke="#3d8fd0"/></svg>
              <svg class="ic" width="12" height="12" viewBox="0 0 12 12"><path d="M1.500 3.500h7v7h-7zM3.500 3.500v-2h7v7h-2" fill="none" stroke="#3d8fd0"/></svg>
              ${closeX("#3d8fd0")}
            </div>
          </div>
          <div class="rowtabs">
            <div class="rt plain">Навигация</div>
            <div class="rt act">Действия</div>
            <div class="rt-right">
              <div>${chev("up", "#fff")}</div>
              <div>${ic("pinUser", 22)}</div>
              <div class="menu">Администратор<span class="caret"></span></div>
              <div>${ic("listing", 16)}</div>
              <div class="nw">Уведомления</div>
              <div class="badge">11</div>
            </div>
          </div>
        </div>
      </div>`;
  }

  private renderRibbon() {
    return html`
      <div class="ribbon">
        <div class="rgroup g1">
          <div class="rrow">
            <div class="rb w86"><div class="ico">${ic("homePlus", 42)}</div>Создать<br />объект учёта</div>
            <div class="rb w86"><div class="ico">${ic("building", 42)}</div>Создать<br />жилой дом</div>
            <div class="rb w62"><div class="ico">${ic("note", 42)}</div>Свойства</div>
            <div class="rb w70"><div class="ico">${ic("cross", 40)}</div>Удалить</div>
          </div>
          <div class="glabel">Редактирование</div>
        </div>
        <div class="rgroup g2">
          <div class="rrow">
            <div class="rb w76"><div class="ico">${ic("funnel", 42)}</div>Очистить<br />фильтр</div>
            <div class="rb w66"><div class="ico">${ic("refresh", 42)}</div>Обновить</div>
            <div class="rfield search">
              <span>Поиск:</span>
              <div class="combo w187"><div class="val"></div><div class="cell">${ic("search", 13)}</div></div>
            </div>
          </div>
        </div>
        <div class="rgroup g3">
          <div class="rrow">
            <div class="rfield group">
              <span>Группа:</span>
              <div class="combo w187"><div class="val"></div><div class="cell"><span class="tri"></span></div><div class="cell">${closeX("#555", 8, 1.800)}</div></div>
            </div>
          </div>
        </div>
        <div class="rgroup g4">
          <div class="rrow">
            <div class="rb w63 on"><div class="ico">${ic("columns", 44)}</div>Выбор<br />колонок</div>
            <div class="rb w70"><div class="ico">${ic("tree", 42)}</div>Иерархия</div>
            <div class="rb w102"><div class="ico">${ic("undo", 42)}</div>По умолчанию</div>
          </div>
        </div>
      </div>
      <div class="docstrip">
        <div class="doctab">Объекты учета ${closeX("#666", 8, 1.400)}</div>
        <div class="docclose">${closeX("#333", 9, 1.500)}</div>
      </div>`;
  }

  private renderLeft() {
    return html`
      <div class="left">
        <div class="lp-title">Действия</div>
        <div class="lp-up"><span class="lp-tri-up"></span></div>
        <div class="lp-scroll">
          <div class="lp-head">Просмотр данных ${chev("left", "#666")}</div>
          ${viewItems.map((it) => this.sideItem(it))}
          <div class="lp-head second">Действия ${chev("left", "#666")}</div>
          ${actionItems.map((it) => this.sideItem(it))}
        </div>
        <div class="lp-down"><span class="lp-tri-down"></span></div>
      </div>`;
  }

  private renderRight() {
    return html`
      <div class="right">
        <div class="rp-head">
          Выбор колонок
          <svg class="ic pin" width="9" height="10" viewBox="0 0 9 10"><path d="M2 0h5v5l1 1v1H5v3H4V7H1V6l1-1z" fill="#222"/></svg>
          ${closeX("#222", 9, 1.700)}
        </div>
        <div class="rp-list">
          <div class="rp-rows">
            <div class="col sel"><span class="cb"></span><span class="lbl">Выбор записей</span></div>
            ${columnsTop.map((c) => this.colRow(c))}
            ${Array.from({ length: 8 }, () => html`<div class="col blank"></div>`)}
            ${columnsBottom.map((c) => this.colRow(c))}
          </div>
          <div class="vs rp-vs">
            <div class="a">${chev("up", "#999")}</div>
            <div class="thumb"></div>
            <div class="rest"></div>
            <div class="b">${chev("down", "#999")}</div>
          </div>
        </div>
      </div>`;
  }

  private renderNav() {
    return html`
      <div class="nav">
        <div class="nav-list">
          ${navItems.map((n) =>
            n.head
              ? html`<div class="ni head">${n.t[0]}</div>`
              : html`<div class="ni ${n.t.length > 1 && !n.tight ? "two" : ""} ${n.sel ? "sel" : ""} ${n.tight ? "tight" : ""}">
                  <span class="slot">${n.i ? ic(n.i, 21) : ""}</span>
                  <div class="txt">${n.t.map((l) => html`<span>${l}</span>`)}</div>
                </div>`
          )}
        </div>
        <div class="vs nav-vs">
          <div class="a">${chev("up")}</div>
          <div class="thumb"></div>
          <div class="rest"></div>
          <div class="b">${chev("down")}</div>
        </div>
      </div>`;
  }

  private renderForm() {
    return html`
      <div class="page">
        <div class="frow"><div class="flabel b">Канал связи:</div>
          <div class="combo w152"><div class="val">${ic("antenna", 18)}GPRS</div><div class="cell"><span class="tri"></span></div></div></div>
        <div class="frow"><div class="flabel b">Наименование:</div><div class="inp w152">iRZ ATM21</div></div>
        <div class="legend-line">Выбор порта для вызова</div>
        <div class="radio"><span class="rd"><i></i></span>Любой доступный порт</div>
        <div class="frow"><div class="flabel"></div><div class="combo off w152"><div class="val"></div><div class="cell"><span class="tri"></span></div></div></div>
        <div class="frow"><div class="flabel"></div><div class="combo off w152"><div class="val"></div><div class="cell"><span class="tri"></span></div></div></div>
        <div class="gprs">
          <div class="legend">Параметры GPRS</div>
          <div class="frow"><div class="flabel b">Модем:</div>
            <div class="combo grow"><div class="val">iRZ ATM21 #869139053843963</div><div class="cell"><span class="tri"></span></div><div class="cell">${closeX("#555", 8, 1.800)}</div><div class="cell">···</div></div></div>
          <div class="extra">Дополнительно... <span class="tri"></span></div>
          <div class="frow"><div class="flabel">Вызов:</div>
            <div class="combo w168"><div class="val">Голосовой вызов</div><div class="cell"><span class="tri"></span></div></div></div>
          <div class="frow"><div class="flabel b2">Номер телефона:</div><div class="inp w190">+798414</div></div>
          <div class="frow"><div class="flabel">Таймаут вызова:</div><div class="inp w190"></div></div>
          <div class="checkline"><span class="cb"></span>Разрывать соединение посл</div>
        </div>
      </div>`;
  }

  private renderDialog() {
    return html`
      <div class="dlg">
        <div class="dlg-title">
          ${ic("home", 22)}<span>Редактирование объекта учёта TEST 15.03</span>
          <span class="q">?</span><span class="x">${closeX("#b4b4b4")}</span>
        </div>
        <div class="dlg-head">
          <div class="dlg-h">Подключения</div>
          <div class="dlg-s">Настройка параметров связи с оборудованием</div>
          <div class="dlg-t">TEST 15.03</div>
        </div>
        <div class="dlg-body">
          ${this.renderNav()}
          <div class="split"><div class="dots"><i></i><i></i><i></i></div></div>
          <div class="pane">
            <div class="tools">
              <svg class="ic" width="38" height="38" viewBox="0 0 38 38">
                <defs><radialGradient id="ga" cx=".4" cy=".3" r=".8"><stop offset="0" stop-color="#d3e8f7"/><stop offset="1" stop-color="#4b92cb"/></radialGradient></defs>
                <circle cx="19" cy="19" r="18" fill="url(#ga)"/><path d="M15 8h8v7h7v8h-7v7h-8v-7H8v-8h7z" fill="#e8f3fb" stroke="#5a9dd0"/>
              </svg>
              <span class="add">Добавить</span><span class="tri"></span>
              <svg class="ic" width="38" height="38" viewBox="0 0 38 38">
                <defs><radialGradient id="gd" cx=".4" cy=".3" r=".8"><stop offset="0" stop-color="#f08a7c"/><stop offset="1" stop-color="#b92a22"/></radialGradient></defs>
                <circle cx="19" cy="19" r="18" fill="url(#gd)"/><path d="M13 13l12 12m0-12L13 25" stroke="#f8ecec" stroke-width="5.500" stroke-linecap="round"/>
              </svg>
              <span class="del">Удалить</span>
            </div>
            <div class="pane-body">
              <div class="conns">
                <div class="conn-back">${chev("left", "#555")}</div>
                <div class="conn">${ic("antenna", 18)}Подключение #1</div>
              </div>
              <div class="split2"><div class="dots"><i></i><i></i><i></i></div></div>
              <div class="tabsbox">
                <div class="tabrow">
                  <div class="ptab on">Параметры</div>
                  <div class="ptab alt">${ic("net", 15)}Подключенное оборудование</div>
                </div>
                ${this.renderForm()}
              </div>
            </div>
          </div>
        </div>
        <div class="foot"><div class="btn">&lt; Назад</div><div class="btn">Далее &gt;</div></div>
        <div class="busy">Идет проверка данных ...</div>
      </div>`;
  }

  private renderAlert() {
    return html`
      <div class="alert">
        <div class="al-title">Редактирование объекта учёта TEST 15.03 ${closeX("#444", 11)}</div>
        <div class="al-body">
          <svg class="ic" width="41" height="37" viewBox="0 0 41 37">
            <defs><linearGradient id="gw" x1="0" y1="0" x2="0" y2="1"><stop offset="0" stop-color="#fdf6b8"/><stop offset="1" stop-color="#e8a90e"/></linearGradient></defs>
            <path d="M20.500 1 40 35.500H1z" fill="url(#gw)" stroke="#8f8f8f" stroke-width="1.300" stroke-linejoin="round"/>
            <path d="M18.500 11h4l-.8 14h-2.400z" fill="#222"/><circle cx="20.500" cy="29.500" r="2.300" fill="#222"/>
          </svg>
          <span>Не заданы устройства, связанные с подключением</span>
        </div>
        <div class="al-foot"><div class="ok"><span>ОК</span></div></div>
      </div>`;
  }

  override render() {
    return html`
      <div class="app">
        ${this.renderHeader()}
        ${this.renderRibbon()}
        <div class="main">
          ${this.renderLeft()}
          <div class="center">
            <div class="canvas"></div>
            <div class="hs">
              <div class="a">${chev("left")}</div>
              <div class="thumb"></div>
              <div class="rest"></div>
              <div class="a">${chev("right")}</div>
            </div>
          </div>
          ${this.renderRight()}
        </div>
        <div class="status">
          <span class="st-count">Записей: 1</span><span class="sdiv"></span>TEST 15.03
          <div class="s-right">
            ${ic("service", 18)}Служб опроса: 1; портов: 1, действует: 1, свободно: 1<span class="sdiv"></span>http://localhost:10000/ | 10:55 (24 мар)
          </div>
        </div>
        ${this.renderDialog()}
        ${this.renderAlert()}
      </div>
    `;
  }
}
